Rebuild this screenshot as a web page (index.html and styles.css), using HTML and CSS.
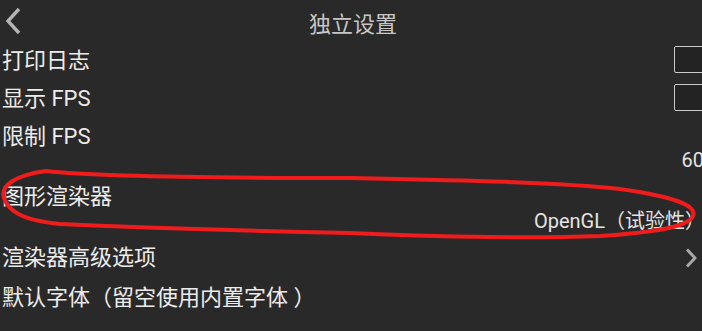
FILE: index.html
```html
<!DOCTYPE html>
<html lang="zh-CN">
<head>
<meta charset="utf-8">
<title>独立设置</title>
<link rel="stylesheet" href="styles.css">
</head>
<body>
<div class="app">
  <header class="topbar">
    <div class="back">
      <svg class="back-icon" width="16" height="28" viewBox="0 0 16 28"><path d="M14 2 L3 14 L14 26" fill="none" stroke="#b4b4b4" stroke-width="3.4" stroke-linecap="butt" stroke-linejoin="miter"/></svg>
    </div>
    <div class="title">独立设置</div>
    <div class="spacer"></div>
  </header>
  <ul class="list">
    <li class="row">
      <div class="row-main"><span class="label">打印日志</span><span class="checkbox"></span></div>
    </li>
    <li class="row">
      <div class="row-main"><span class="label">显示 FPS</span><span class="checkbox"></span></div>
    </li>
    <li class="row">
      <div class="row-main"><span class="label">限制 FPS</span></div>
      <div class="value value-num">60</div>
    </li>
    <li class="row">
      <div class="row-main"><span class="label">图形渲染器</span></div>
      <div class="value">OpenGL<span class="fw" lang="zh-TW">（</span>试验性<span class="fw" lang="zh-TW">）</span></div>
    </li>
    <li class="row">
      <div class="row-main"><span class="label">渲染器高级选项</span>
        <svg class="chevron" width="12" height="20" viewBox="0 0 12 20"><path d="M2 1.5 L10 10 L2 18.5" fill="none" stroke="#a8a8a8" stroke-width="3"/></svg>
      </div>
    </li>
    <li class="row">
      <div class="row-main"><span class="label">默认字体<span class="fw" lang="zh-TW">（</span>留空使用内置字体<span class="fw fw-close" lang="zh-TW">）</span></span></div>
    </li>
  </ul>
</div>
<svg class="annotation" width="702" height="331" viewBox="0 0 702 331">
  <path d="M 46 171 C 90 176, 200 178, 351 178 C 450 180, 560 182, 620 189 C 670 196, 698 205, 693 216 C 689 226, 660 232, 600 236 C 520 239, 420 236, 351 233 C 250 231, 150 228, 60 224 C 20 220, 8 210, 4 198 C 0 186, 15 175, 46 171" fill="none" stroke="#f01c1c" stroke-width="4" stroke-linecap="round" stroke-linejoin="round"/>
</svg>
</body>
</html>
```

FILE: styles.css
```css
html, body {
  margin: 0;
  padding: 0;
  background: #292929;
  overflow: hidden;
  width: 702px;
  height: 331px;
}

body {
  position: relative;
  font-family: "Roboto", "Noto Sans CJK SC", sans-serif;
  color: #e8e8e8;
}

.app {
  width: 706px;
}

.topbar {
  display: grid;
  grid-template-columns: 1fr auto 1fr;
  align-items: center;
  height: 42px;
}

.back {
  display: flex;
  align-items: center;
  padding-left: 5px;
}

.back-icon {
  display: block;
  margin-top: -1px;
}

.title {
  font-family: "Noto Sans CJK SC", sans-serif;
  font-size: 22px;
  line-height: 24px;
  color: #c6c6c6;
  margin-top: 2px;
}

.list {
  list-style: none;
  margin: 0;
  padding: 0;
}

.row {
  padding: 7px 0 7px 2px;
}

.row-main {
  display: flex;
  justify-content: space-between;
  align-items: center;
  height: 24px;
}

.label {
  font-size: 22px;
  line-height: 24px;
  color: #ececec;
  white-space: nowrap;
}

.fw {
  display: inline-block;
  box-sizing: border-box;
  width: 1em;
  text-align: center;
  font-family: "Noto Sans CJK TC", "Noto Sans CJK SC", sans-serif;
}

.fw-close {
  padding-left: 0.25em;
}

.checkbox {
  box-sizing: border-box;
  width: 31px;
  height: 27px;
  margin-top: -3px;
  margin-right: 1px;
  border: 1.5px solid #c9c9c9;
  border-radius: 2px;
  background: #232323;
  align-self: flex-start;
}

.chevron {
  display: block;
  margin-right: 9px;
  margin-top: -1px;
}

.value {
  text-align: right;
  font-size: 20px;
  line-height: 22px;
  color: #e4e4e4;
  white-space: nowrap;
  padding-right: 1px;
}

.value-num {
  padding-right: 2px;
}

.annotation {
  position: absolute;
  left: 0;
  top: 0;
  pointer-events: none;
}
```
